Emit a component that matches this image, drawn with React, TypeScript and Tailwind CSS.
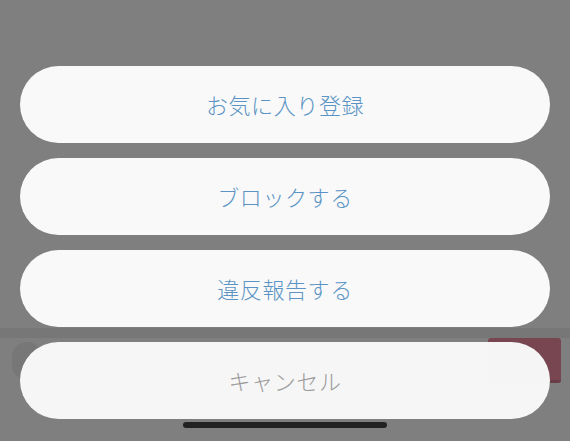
import React from 'react';

const ACTIONS = [
  { id: 'fav', label: 'お気に入り登録' },
  { id: 'block', label: 'ブロックする' },
  { id: 'report', label: '違反報告する' },
];

const FONT = { fontFamily: '"Noto Sans CJK JP", "Noto Sans", sans-serif' };

// dimmed list row that sits behind the sheet
const BackdropRow = () => (
  <div className="absolute left-0 right-0 top-[328px]">
    <div className="h-[10px] bg-[#777777]" />
    <div className="flex items-center justify-between h-[45px] pl-[12px] pr-[9px]">
      <div className="w-[30px] h-[38px] rounded-full bg-[#777777]" />
      <div className="w-[73px] h-[45px] rounded-[3px] bg-[#774650] border-b-[3px] border-[#6a3c45]" />
    </div>
  </div>
);

export default function App() {
  return (
    <div className="relative w-[570px] h-[441px] overflow-hidden bg-[#7f7f7f]" style={FONT}>
      <BackdropRow />
      <div className="relative flex flex-col gap-[15px] px-[20px] pt-[66px]">
        {ACTIONS.map((a) => (
          <button
            key={a.id}
            className="h-[77px] w-full rounded-full bg-[#f9f9f9] text-[22px] font-light text-[#5b94c4] tracking-[0.6px]"
          >
            {a.label}
          </button>
        ))}
        <button className="h-[77px] w-full rounded-full bg-[#f8f8f8]/[0.985] text-[22px] font-light text-[#9a9a9a] tracking-[0.6px]">
          キャンセル
        </button>
      </div>
      <div className="relative flex justify-center mt-[3px]">
        <div className="w-[204px] h-[6px] rounded-full bg-[#222222]" />
      </div>
    </div>
  );
}
